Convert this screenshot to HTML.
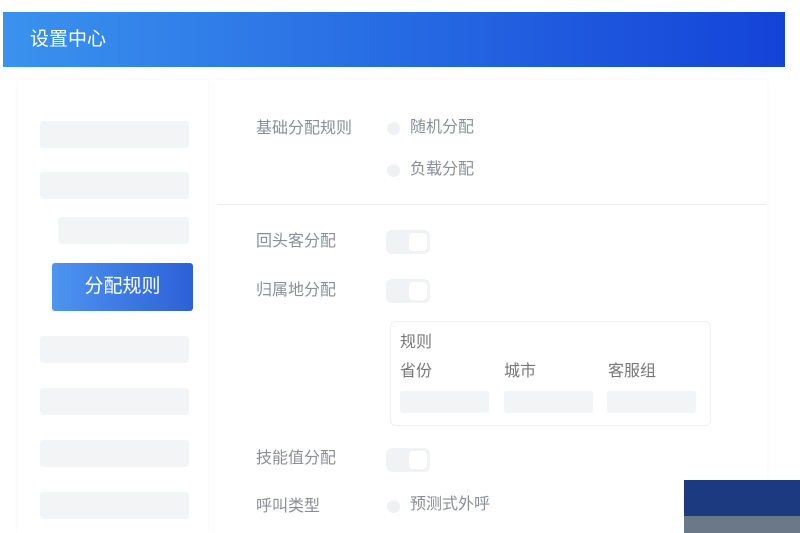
<!DOCTYPE html>
<html><head><meta charset="utf-8"><style>
body{margin:0;width:800px;height:533px;background:#fff;position:relative;overflow:hidden;font-family:"Liberation Sans","Noto Sans CJK SC",sans-serif;}
div{position:absolute;box-sizing:border-box}
.hdr{left:3px;top:12px;width:782px;height:55px;background:linear-gradient(90deg,#3a92ee,#1443d8);color:#fff;font-size:19px;line-height:55px;padding-left:27px}
.bar{background:#f3f4f6;border-radius:3px;height:27px}
.lbl{font-size:16px;color:#8a8f96;line-height:20px}
.rad{width:13px;height:13px;border-radius:50%;background:#f0f1f3}
.sw{width:44px;height:24px;border-radius:6px;background:#f1f2f4}
.sw:after{content:"";position:absolute;right:3px;top:3px;width:18px;height:18px;background:#fff;border-radius:4px}
</style></head><body>
<div class="hdr">设置中心</div>
<div style="left:18px;top:80px;width:190px;height:453px;box-shadow:0 0 6px rgba(0,0,0,0.04)"></div>
<div style="left:215px;top:80px;width:552px;height:453px;box-shadow:0 0 6px rgba(0,0,0,0.04)"></div>
<div style="left:218px;top:204px;width:548px;height:1px;background:#eceef0"></div>
<div class="bar" style="left:40px;top:121px;width:149px"></div>
<div class="bar" style="left:40px;top:172px;width:149px"></div>
<div class="bar" style="left:58px;top:217px;width:131px"></div>
<div style="left:52px;top:263px;width:141px;height:48px;border-radius:3px;background:linear-gradient(90deg,#4d95f0,#2d60d8);color:#fff;font-size:19px;line-height:48px;text-align:center">分配规则</div>
<div class="bar" style="left:40px;top:336px;width:149px"></div>
<div class="bar" style="left:40px;top:388px;width:149px"></div>
<div class="bar" style="left:40px;top:440px;width:149px"></div>
<div class="bar" style="left:40px;top:492px;width:149px"></div>

<div class="lbl" style="left:256px;top:119px">基础分配规则</div>
<div class="rad" style="left:387px;top:122px"></div><div class="lbl" style="left:410px;top:118px">随机分配</div>
<div class="rad" style="left:387px;top:164px"></div><div class="lbl" style="left:410px;top:160px">负载分配</div>
<div class="lbl" style="left:256px;top:232px">回头客分配</div><div class="sw" style="left:386px;top:230px"></div>
<div class="lbl" style="left:256px;top:281px">归属地分配</div><div class="sw" style="left:386px;top:279px"></div>
<div style="left:390px;top:321px;width:321px;height:105px;border:1px solid #eef0f2;border-radius:6px"></div>
<div class="lbl" style="left:400px;top:333px;color:#777">规则</div>
<div class="lbl" style="left:400px;top:362px;color:#777">省份</div>
<div class="lbl" style="left:504px;top:362px;color:#777">城市</div>
<div class="lbl" style="left:608px;top:362px;color:#777">客服组</div>
<div class="bar" style="left:400px;top:391px;width:89px;height:22px"></div>
<div class="bar" style="left:504px;top:391px;width:89px;height:22px"></div>
<div class="bar" style="left:607px;top:391px;width:89px;height:22px"></div>
<div class="lbl" style="left:256px;top:449px">技能值分配</div><div class="sw" style="left:386px;top:448px"></div>
<div class="lbl" style="left:256px;top:497px">呼叫类型</div>
<div class="rad" style="left:387px;top:500px"></div><div class="lbl" style="left:410px;top:495px">预测式外呼</div>
<div style="left:684px;top:480px;width:116px;height:53px;background:#1b3a80"></div>
<div style="left:684px;top:516px;width:116px;height:17px;background:#6b7887"></div>
</body></html>
